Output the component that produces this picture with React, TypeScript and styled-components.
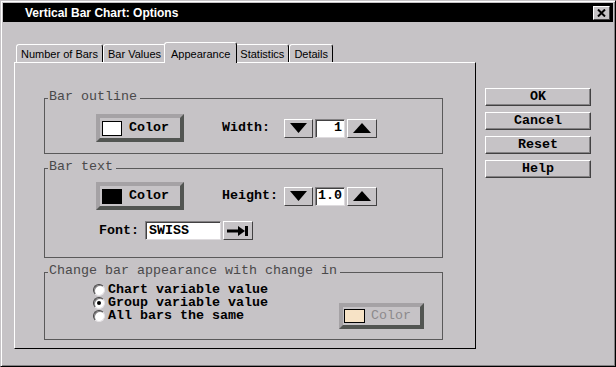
import React from "react";
import styled, { createGlobalStyle } from "styled-components";

const FACE = "#c6c3c6";
const MONO = `"Liberation Mono", "DejaVu Sans Mono", monospace`;
const SANS = `"Liberation Sans", Arial, sans-serif`;

const GlobalStyle = createGlobalStyle`
  html, body {
    margin: 0;
    padding: 0;
    background: ${FACE};
    overflow: hidden;
  }
  * {
    box-sizing: border-box;
  }
`;

const Window = styled.div`
  width: 616px;
  height: 367px;
  background: ${FACE};
  border: 1px solid;
  border-color: ${FACE} #000 #000 ${FACE};
  box-shadow: inset 1px 1px 0 #fff, inset -1px -1px 0 #848284;
  padding: 1px;
  display: flex;
  flex-direction: column;
  font-family: ${MONO};
`;

const TitleBar = styled.div`
  margin: 1px;
  height: 19px;
  background: #000;
  color: #fff;
  display: flex;
  align-items: center;
  padding: 0 3px 0 22px;
  font: bold 12px ${SANS};
`;

const CloseButton = styled.div`
  margin-left: auto;
  width: 17px;
  height: 14px;
  background: ${FACE};
  border: 1px solid;
  border-color: #fff #424142 #424142 #fff;
  display: flex;
  align-items: center;
  justify-content: center;
`;

const Body = styled.div`
  display: flex;
  align-items: flex-start;
  padding: 19px 0 0 12px;
`;

const TabArea = styled.div`
  display: flex;
  flex-direction: column;
  width: 462px;
`;

const TabStrip = styled.div`
  display: flex;
  align-items: flex-end;
  padding-left: 2px;
  height: 20px;
  position: relative;
  z-index: 1;
`;

const Tab = styled.div<{ $active?: boolean }>`
  font: 11px/16px ${SANS};
  color: #000;
  white-space: nowrap;
  padding: ${(p) => (p.$active ? "3px 6px 1px" : "1px 4px 0")};
  margin: ${(p) => (p.$active ? "0 -2px -1px" : "0")};
  border: 1px solid;
  border-bottom: none;
  border-color: #fff #000 transparent #fff;
  border-radius: 3px 3px 0 0;
  background: ${FACE};
  position: relative;
  z-index: ${(p) => (p.$active ? 2 : 1)};
`;

const Panel = styled.div`
  width: 462px;
  height: 287px;
  border: 1px solid;
  border-color: #fff #000 #000 #fff;
  padding: 27px 0 0 29px;
  display: flex;
  flex-direction: column;
  gap: 6px;
`;

const Group = styled.fieldset<{ $pad: string }>`
  margin: 0;
  min-width: 0;
  width: 399px;
  border: 1px solid #5a595a;
  padding: ${(p) => p.$pad};
`;

const Legend = styled.legend`
  margin-left: 3px;
  padding: 0 3px 3px 1px;
  font: 13.33px/13px ${MONO};
  color: #4a494a;
`;

const Row = styled.div<{ $indent: number; $top?: number }>`
  display: flex;
  align-items: center;
  margin-left: ${(p) => p.$indent}px;
  margin-top: ${(p) => p.$top ?? 0}px;
`;

const ColorButton = styled.div<{ $disabled?: boolean }>`
  display: flex;
  align-items: center;
  width: ${(p) => (p.$disabled ? 85 : 88)}px;
  height: ${(p) => (p.$disabled ? 26 : 28)}px;
  padding-left: ${(p) => (p.$disabled ? 1 : 2)}px;
  border: 4px solid;
  border-color: #a5a2a5 #525552 #525552 #a5a2a5;
  background: ${FACE};
  font: ${(p) => (p.$disabled ? "normal" : "bold")} 13.33px/16px ${MONO};
  color: ${(p) => (p.$disabled ? "#8c8a8c" : "#000")};
`;

const Swatch = styled.span<{ $color: string; $wide?: boolean }>`
  width: ${(p) => (p.$wide ? 21 : 20)}px;
  height: ${(p) => (p.$wide ? 14 : 15)}px;
  border: 1px solid #000;
  background: ${(p) => p.$color};
  margin-right: ${(p) => (p.$wide ? 6 : 7)}px;
`;

const Label = styled.span<{ $width: number; $gap?: number }>`
  width: ${(p) => p.$width}px;
  margin-left: ${(p) => p.$gap ?? 0}px;
  font: bold 13.33px/16px ${MONO};
  color: #000;
  white-space: pre;
`;

const Spinner = styled.div`
  display: flex;
  gap: 2px;
`;

const SmallButton = styled.div<{ $width: number }>`
  width: ${(p) => p.$width}px;
  height: 19px;
  background: ${FACE};
  border: 1px solid;
  border-color: #fff #424142 #424142 #fff;
  display: flex;
  align-items: center;
  justify-content: center;
`;

const Field = styled.div<{ $width: number; $right?: boolean }>`
  width: ${(p) => p.$width}px;
  height: 19px;
  background: #fff;
  border: 1px solid;
  border-color: #848284 #dedbde #dedbde #848284;
  box-shadow: inset 1px 1px 0 #424142;
  display: flex;
  align-items: center;
  justify-content: ${(p) => (p.$right ? "flex-end" : "flex-start")};
  padding: 0 2px 0 3px;
  font: bold 13.33px/16px ${MONO};
  color: #000;
`;

const ChangeRow = styled.div`
  display: flex;
  align-items: flex-start;
`;

const RadioList = styled.div`
  display: flex;
  flex-direction: column;
  margin-left: 48px;
`;

const RadioRow = styled.div`
  display: flex;
  align-items: center;
  gap: 3px;
  height: 13px;
  font: bold 13.33px/13px ${MONO};
  color: #000;
  white-space: pre;
`;

const RadioCircle = styled.span<{ $checked?: boolean }>`
  width: 12px;
  height: 12px;
  border-radius: 50%;
  background: #fff;
  border: 1px solid;
  border-color: #424142 #e6e3e6 #e6e3e6 #424142;
  box-shadow: inset 1px 1px 0 #848284;
  display: flex;
  align-items: center;
  justify-content: center;

  &::after {
    content: "";
    display: ${(p) => (p.$checked ? "block" : "none")};
    width: 4px;
    height: 4px;
    border-radius: 50%;
    background: #000;
  }
`;

const DisabledSlot = styled.div`
  margin: 20px 18px 0 auto;
`;

const ButtonColumn = styled.div`
  display: flex;
  flex-direction: column;
  gap: 6px;
  margin: 46px 0 0 9px;
  width: 106px;
`;

const DialogButton = styled.div`
  height: 18px;
  background: ${FACE};
  border: 1px solid;
  border-color: #fff #424142 #424142 #fff;
  box-shadow: inset -1px -1px 0 #848284;
  font: bold 13.33px/16px ${MONO};
  color: #000;
  text-align: center;
  white-space: pre;
`;

const DownArrow = () => (
  <svg width="17" height="10" viewBox="0 0 17 10">
    <polygon points="0,0 17,0 8.5,10" fill="#000" />
  </svg>
);

const UpArrow = () => (
  <svg width="18" height="10" viewBox="0 0 18 10">
    <polygon points="0,10 18,10 9,0" fill="#000" />
  </svg>
);

const SelectArrow = () => (
  <svg width="22" height="10" viewBox="0 0 22 10">
    <rect x="0" y="3.5" width="12" height="3" fill="#000" />
    <polygon points="11,0 18,5 11,10" fill="#000" />
    <rect x="18" y="0" width="3" height="10" fill="#000" />
  </svg>
);

const CloseIcon = () => (
  <svg width="9" height="8" viewBox="0 0 9 8">
    <path d="M1 0.5 L8 7.5 M8 0.5 L1 7.5" stroke="#000" strokeWidth="2" />
  </svg>
);

const SpinControl = ({ value }: { value: string }) => (
  <Spinner>
    <SmallButton $width={29}>
      <DownArrow />
    </SmallButton>
    <Field $width={30} $right>
      {value}
    </Field>
    <SmallButton $width={30}>
      <UpArrow />
    </SmallButton>
  </Spinner>
);

const tabs = ["Number of Bars", "Bar Values", "Appearance", "Statistics", "Details"];
const radios = [
  { label: "Chart variable value", checked: false },
  { label: "Group variable value", checked: true },
  { label: "All bars the same", checked: false },
];
const actions = ["OK", "Cancel", "Reset", "Help"];

const App = () => {
  return (
    <>
      <GlobalStyle />
      <Window>
        <TitleBar>
          Vertical Bar Chart: Options
          <CloseButton>
            <CloseIcon />
          </CloseButton>
        </TitleBar>
        <Body>
          <TabArea>
            <TabStrip>
              {tabs.map((t) => (
                <Tab key={t} $active={t === "Appearance"}>
                  {t}
                </Tab>
              ))}
            </TabStrip>
            <Panel>
              <Group $pad="8px 0 11px">
                <Legend>Bar outline</Legend>
                <Row $indent={51}>
                  <ColorButton>
                    <Swatch $color="#fff" />
                    Color
                  </ColorButton>
                  <Label $width={62} $gap={38}>
                    Width:
                  </Label>
                  <SpinControl value="1" />
                </Row>
              </Group>
              <Group $pad="6px 0 17px">
                <Legend>Bar text</Legend>
                <Row $indent={51}>
                  <ColorButton>
                    <Swatch $color="#000" />
                    Color
                  </ColorButton>
                  <Label $width={62} $gap={38}>
                    Height:
                  </Label>
                  <SpinControl value="1.0" />
                </Row>
                <Row $indent={54} $top={11}>
                  <Label $width={46}>Font:</Label>
                  <Field $width={76}>SWISS</Field>
                  <SmallButton $width={30} style={{ marginLeft: 2 }}>
                    <SelectArrow />
                  </SmallButton>
                </Row>
              </Group>
              <Group $pad="3px 0 10px">
                <Legend>Change bar appearance with change in</Legend>
                <ChangeRow>
                  <RadioList>
                    {radios.map((r) => (
                      <RadioRow key={r.label}>
                        <RadioCircle $checked={r.checked} />
                        {r.label}
                      </RadioRow>
                    ))}
                  </RadioList>
                  <DisabledSlot>
                    <ColorButton $disabled>
                      <Swatch $color="#f7e3c6" $wide />
                      Color
                    </ColorButton>
                  </DisabledSlot>
                </ChangeRow>
              </Group>
            </Panel>
          </TabArea>
          <ButtonColumn>
            {actions.map((a) => (
              <DialogButton key={a}>{a}</DialogButton>
            ))}
          </ButtonColumn>
        </Body>
      </Window>
    </>
  );
};

export default App;
